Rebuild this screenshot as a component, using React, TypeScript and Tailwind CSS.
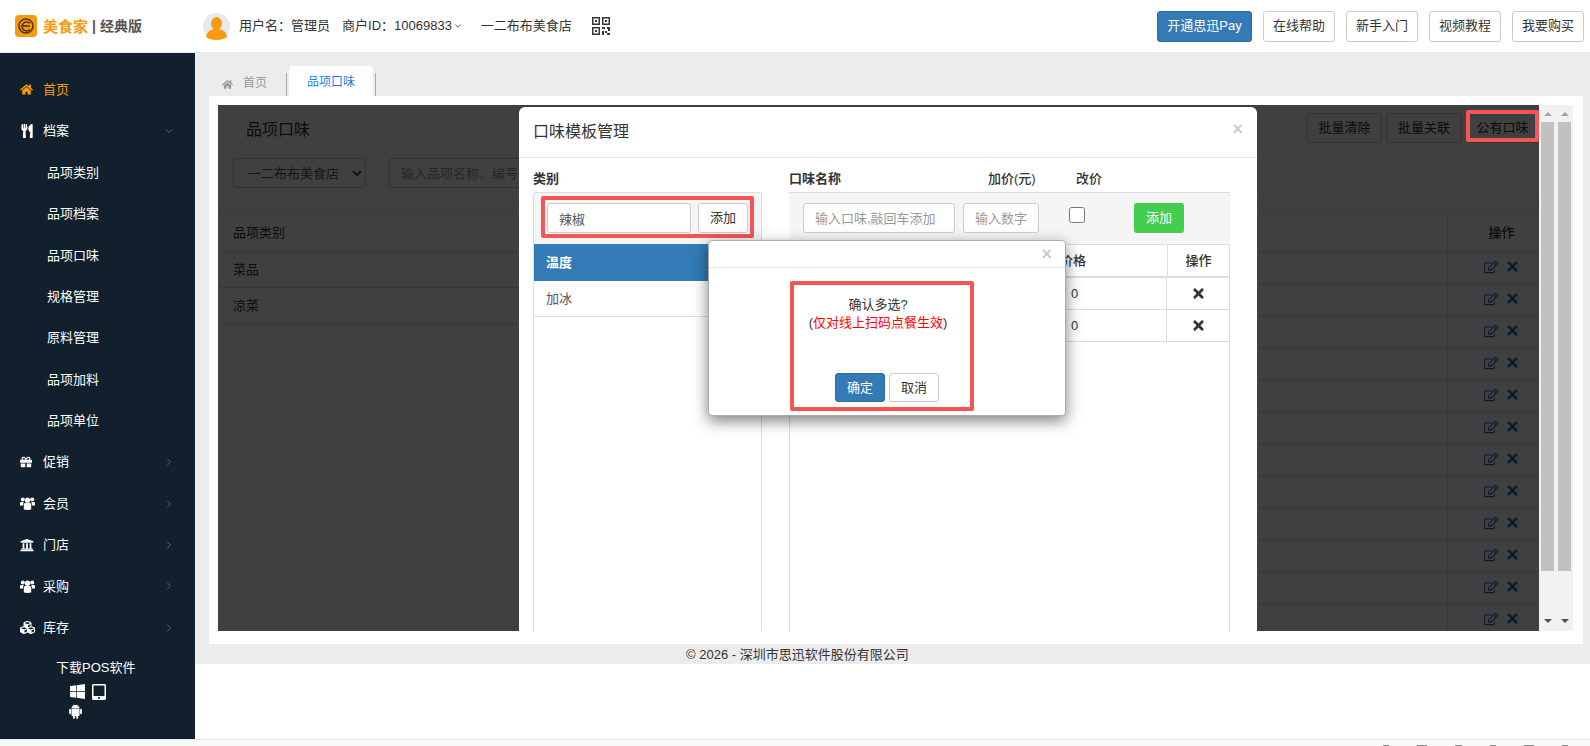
import React from "react";
import { AiFillAndroid } from "react-icons/ai";
import { FaCubes, FaGift, FaHome, FaRegEdit, FaTabletAlt, FaTimes, FaUniversity, FaUtensils, FaWindows } from "react-icons/fa";
import { LuChevronDown, LuChevronRight } from "react-icons/lu";

function GroupIcon() {
  return (
    <svg width="15" height="13" viewBox="0 0 15 13" fill="currentColor">
      <circle cx="2.8" cy="2.4" r="2" />
      <circle cx="12.2" cy="2.4" r="2" />
      <path d="M0 9V6.2C0 5.4.6 5 1.4 5h2.2L3 8.6H0zM15 9V6.2c0-.8-.6-1.2-1.4-1.2h-2.2L12 8.6h3z" />
      <circle cx="7.5" cy="3.2" r="2.6" />
      <path d="M3.8 12.6V8c0-1.4.9-2.2 2.1-2.2h3.2c1.2 0 2.1.8 2.1 2.2v4.6c-2.4.5-5 .5-7.4 0z" />
    </svg>
  );
}

const subItems = ["品项类别", "品项档案", "品项口味", "规格管理", "原料管理", "品项加料", "品项单位"];
const mainItems = [
  { label: "促销", icon: <FaGift size={12} /> },
  { label: "会员", icon: <GroupIcon /> },
  { label: "门店", icon: <FaUniversity size={14} /> },
  { label: "采购", icon: <GroupIcon /> },
  { label: "库存", icon: <FaCubes size={15} /> },
];
const headerButtons = ["在线帮助", "新手入门", "视频教程", "我要购买"];
const rowIndexes = [1, 2, 3, 4, 5, 6, 7, 8, 9, 10, 11, 12];

function Logo() {
  return (
    <div className="flex items-center w-[188px] pl-[15px] shrink-0">
      <svg width="22" height="22" viewBox="0 0 22 22" className="shrink-0">
        <rect width="22" height="22" rx="4" fill="#f79a0e" />
        <circle cx="11" cy="11" r="7" fill="none" stroke="#4a3418" strokeWidth="1.6" />
        <path d="M6 11h9M15 8.5a4.5 4.5 0 1 0 0 6" fill="none" stroke="#4a3418" strokeWidth="1.5" />
      </svg>
      <span className="ml-[6px] text-[15px] leading-none font-bold text-[#f79a0e]">美食家</span>
      <span className="mx-[4px] text-[14px] leading-none font-bold text-[#555]">|</span>
      <span className="text-[14px] leading-none font-bold text-[#555]">经典版</span>
    </div>
  );
}

function Avatar() {
  return (
    <svg width="27" height="27" viewBox="0 0 27 27" className="shrink-0">
      <ellipse cx="13.5" cy="13.5" rx="13.5" ry="13.5" fill="#e8e9ee" />
      <ellipse cx="13.5" cy="10.5" rx="5.5" ry="6.5" fill="#f79a0e" />
      <path d="M3 24c1-6 5-8 10.5-8S23 18 24 24c-3 2-6 3-10.5 3S6 26 3 24z" fill="#f79a0e" />
    </svg>
  );
}

function QrIcon() {
  return (
    <svg width="18" height="18" viewBox="0 0 18 18" fill="#33363c" className="shrink-0">
      <path d="M0 0h8v8H0zM1.5 1.5v5h5v-5zM10 0h8v8h-8zM11.5 1.5v5h5v-5zM0 10h8v8H0zM1.5 11.500v5h5v-5z" fillRule="evenodd" />
      <rect x="3" y="3" width="2" height="2" />
      <rect x="13" y="3" width="2" height="2" />
      <rect x="3" y="13" width="2" height="2" />
      <path d="M10 10h3v2h-3zM15 10h3v4h-2v-2h-1zM10 14h2v4h-2zM13 14h2v2h-2zM15 16h3v2h-3z" />
    </svg>
  );
}

function Header() {
  return (
    <header className="flex items-center h-[53px] shrink-0 bg-white border-b border-[#e8e8e8] text-[13px] text-[#333]">
      <Logo />
      <div className="ml-[15px]">
        <Avatar />
      </div>
      <span className="ml-[9px]">用户名：管理员</span>
      <span className="ml-[12px]">商户ID：10069833</span>
      <LuChevronDown size={10} className="ml-[1px]" />
      <span className="ml-[18px]">一二布布美食店</span>
      <div className="ml-[20px]">
        <QrIcon />
      </div>
      <div className="ml-auto flex gap-[11px] pr-[6px]">
        <button className="h-[31px] w-[95px] rounded-[3px] bg-[#337ab7] border border-[#2e6da4] text-white">开通思迅Pay</button>
        {headerButtons.map((label) => (
          <button key={label} className="h-[31px] w-[72px] rounded-[3px] bg-white border border-[#ccc] text-[#333]">
            {label}
          </button>
        ))}
      </div>
    </header>
  );
}

function Sidebar() {
  return (
    <aside className="w-[195px] shrink-0 h-[686px] bg-[#12202d] text-white text-[13px] pt-[16px]">
      <div className="flex items-center h-[41.4px] pl-[20px] text-[#f79a0e]">
        <span className="w-[23px]">
          <FaHome size={13} />
        </span>
        首页
      </div>
      <div className="flex items-center h-[41.4px] pl-[20px]">
        <span className="w-[23px]">
          <FaUtensils size={14} />
        </span>
        档案
        <LuChevronDown size={12} className="ml-auto mr-[20px] text-[#5a6570]" />
      </div>
      {subItems.map((label) => (
        <div key={label} className="flex items-center h-[41.4px] pl-[47px]">
          {label}
        </div>
      ))}
      {mainItems.map((item) => (
        <div key={item.label} className="flex items-center h-[41.4px] pl-[20px]">
          <span className="w-[23px]">{item.icon}</span>
          {item.label}
          <LuChevronRight size={12} className="ml-auto mr-[20px] text-[#5a6570]" />
        </div>
      ))}
      <div className="pl-[56px] pt-[11px] leading-[18px]">下载POS软件</div>
      <div className="flex flex-wrap items-center w-[40px] ml-[69px] mt-[6px] gap-x-[5px] gap-y-[3px]">
        <FaWindows size={17} />
        <FaTabletAlt size={16} />
        <AiFillAndroid size={17} className="-ml-[2px]" />
      </div>
    </aside>
  );
}

function Tabs() {
  return (
    <div className="flex h-[30px] pl-[28px] text-[12px]">
      <div className="flex items-center w-[64px] h-[23px] mt-[7px] text-[#999] border-r border-[#aaa]">
        <FaHome size={11} className="mr-[10px] -ml-[1px]" />
        <span className="-translate-y-[2px]">首页</span>
      </div>
      <div className="flex items-center justify-center w-[84px] ml-[2px] pt-[2px] bg-white rounded-t-[4px] text-[#1a7fe8]">品项口味</div>
      <div className="w-px h-[23px] mt-[7px] ml-[2px] bg-[#aaa]" />
    </div>
  );
}

function GhostButton({ label, width }: { label: string; width: string }) {
  return <button className={`h-[30px] ${width} rounded-[3px] bg-white border border-[#ccc] text-[13px] text-[#333]`}>{label}</button>;
}

function PageBehind() {
  return (
    <div className="h-full bg-white text-[13px] text-[#333]">
      <div className="flex items-start h-[53px] pl-[28px] pt-[8px]">
        <span className="text-[16px] leading-[34px]">品项口味</span>
        <div className="ml-auto flex gap-[4px]">
          <GhostButton label="批量清除" width="w-[75px]" />
          <GhostButton label="批量关联" width="w-[76px]" />
          <GhostButton label="公有口味" width="w-[73px]" />
        </div>
      </div>
      <div className="flex gap-[23px] pl-[15px] h-[38px]">
        <select className="h-[30px] w-[133px] pl-[10px] rounded-[3px] border border-[#ccc] bg-white text-[13px] text-[#555]">
          <option>一二布布美食店</option>
        </select>
        <input
          readOnly
          placeholder="输入品项名称、编号"
          className="h-[30px] w-[200px] px-[11px] rounded-[3px] border border-[#ccc] text-[13px] placeholder:text-[#999]"
        />
      </div>
      <div className="h-[19px] border-y border-[#e8e8e8] bg-[#f9f9f9]" />
      <div className="flex">
        <div className="w-[301px] pl-[1px]">
          <div className="flex items-center h-[37px] pl-[14px] border-b border-[#ddd]">品项类别</div>
          <div className="flex items-center h-[36px] pl-[14px] border-b border-[#ddd]">菜品</div>
          <div className="flex items-center h-[36px] pl-[14px] border-b border-[#ddd]">凉菜</div>
        </div>
        <div className="flex-1">
          <div className="flex justify-end h-[37px] border-b border-[#ddd]">
            <div className="flex items-center justify-center w-[92px] pl-[16px] border-l border-[#ddd] font-medium">操作</div>
          </div>
          {rowIndexes.map((row) => (
            <div key={row} className="flex justify-end h-[32px] border-b border-[#ddd]">
              <div className="flex items-center justify-center gap-[7px] w-[92px] pl-[16px] pb-[2px] border-l border-[#ddd] text-[#337ab7]">
                <FaRegEdit size={14} />
                <FaTimes size={15} />
              </div>
            </div>
          ))}
        </div>
      </div>
    </div>
  );
}

function TemplateModal() {
  return (
    <div className="absolute left-[301px] top-[2px] w-[738px] h-[700px] bg-white rounded-[6px] text-[13px] text-[#333]">
      <div className="flex items-center justify-between h-[51px] pl-[14px] pr-[14px] border-b border-[#e5e5e5]">
        <span className="text-[16px]">口味模板管理</span>
        <span className="text-[18px] font-bold leading-none text-[#ccc] -translate-y-[3px]">×</span>
      </div>
      <div className="flex pl-[14px] pt-[11px]">
        <div className="w-[229px]">
          <div className="h-[23px] leading-[20px] font-bold">类别</div>
          <div className="h-[52px] px-[7px] py-[3px] bg-[#f5f5f5] border-x border-t border-[#ddd] rounded-t-[3px]">
            <div className="flex items-end gap-[7px] w-[213px] h-[42px] px-[2px] pb-[1px] border-[4px] border-[#f55555] rounded-[2px]">
              <input
                readOnly
                defaultValue="辣椒"
                className="h-[30px] w-[144px] px-[11px] bg-white rounded-[3px] border border-[#ccc] text-[13px] text-[#555]"
              />
              <button className="h-[30px] w-[50px] bg-white rounded-[3px] border border-[#ccc]">添加</button>
            </div>
          </div>
          <div className="h-[400px] border border-t-0 border-[#ddd]">
            <div className="flex items-center h-[37px] pl-[12px] bg-[#337ab7] text-white font-bold">温度</div>
            <div className="flex items-center h-[36px] pl-[12px] border-b border-[#ddd] text-[#555]">加冰</div>
          </div>
        </div>
        <div className="w-[441px] ml-[27px]">
          <div className="flex h-[23px] leading-[20px] font-bold">
            <span className="w-[199px]">口味名称</span>
            <span className="w-[88px] font-medium">加价(元)</span>
            <span className="font-medium">改价</span>
          </div>
          <div className="flex h-[52px] pl-[14px] pt-[10px] bg-[#f5f5f5] border-t border-[#ddd]">
            <input
              readOnly
              placeholder="输入口味,敲回车添加"
              className="h-[30px] w-[152px] px-[11px] bg-white rounded-[3px] border border-[#ccc] text-[13px] placeholder:text-[#999]"
            />
            <input
              readOnly
              placeholder="输入数字"
              className="h-[30px] w-[76px] ml-[8px] px-[11px] bg-white rounded-[3px] border border-[#ccc] text-[13px] placeholder:text-[#999]"
            />
            <input type="checkbox" readOnly className="w-[16px] h-[16px] ml-[30px] mt-[4px]" />
            <button className="h-[30px] w-[50px] ml-[49px] bg-[#44ce50] rounded-[3px] text-white">添加</button>
          </div>
          <div className="h-[400px] border border-[#ddd] rounded-t-[3px]">
            <div className="flex h-[33px] border-b-2 border-[#ddd] font-medium">
              <span className="flex items-center pl-[270px] w-[378px] border-r border-[#ddd]">价格</span>
              <span className="flex items-center justify-center flex-1">操作</span>
            </div>
            {[0, 1].map((row) => (
              <div key={row} className="flex h-[32px] border-b border-[#ddd]">
                <span className="flex items-center pl-[281px] w-[377px] border-r border-[#ddd]">0</span>
                <span className="flex items-center justify-center flex-1">
                  <FaTimes size={15} />
                </span>
              </div>
            ))}
          </div>
        </div>
      </div>
    </div>
  );
}

function ConfirmDialog() {
  return (
    <div className="absolute left-[490px] top-[135px] w-[358px] h-[176px] bg-white rounded-[4px] border border-[#aaa] shadow-[0_5px_15px_rgba(0,0,0,0.5)] text-[13px] text-[#333]">
      <div className="flex items-center justify-end h-[27px] pr-[13px] border-b border-[#e5e5e5]">
        <span className="text-[18px] font-bold leading-none text-[#ccc]">×</span>
      </div>
      <div className="flex flex-col items-center w-[184px] h-[130px] ml-[81px] mt-[13px] border-[4px] border-[#f55555] rounded-[2px] pt-[11px]">
        <p className="leading-[18px] mr-[8px]">确认多选?</p>
        <p className="leading-[18px] mr-[8px]">
          (<span className="text-[#f00]">仅对线上扫码点餐生效</span>)
        </p>
        <div className="flex gap-[4px] mt-auto mb-[5px] ml-[10px]">
          <button className="h-[29px] w-[50px] rounded-[3px] bg-[#337ab7] border border-[#2e6da4] text-white">确定</button>
          <button className="h-[29px] w-[50px] rounded-[3px] bg-white border border-[#ccc]">取消</button>
        </div>
      </div>
    </div>
  );
}

function ScrollTrack() {
  return (
    <div className="flex flex-col items-center w-[17px] h-[526px] bg-[#f1f1f1]">
      <div className="mt-[7px] w-0 h-0 border-x-[4px] border-x-transparent border-b-[4px] border-b-[#a3a3a3]" />
      <div className="mt-[6px] w-[13px] h-[449px] bg-[#c1c1c1]" />
      <div className="mt-[48px] w-0 h-0 border-x-[4px] border-x-transparent border-t-[4px] border-t-[#505050]" />
    </div>
  );
}

function Workspace() {
  return (
    <div className="flex w-[1374px] h-[548px] ml-[14px] pl-[9px] pt-[9px] bg-white">
      <div className="relative w-[1321px] h-[526px] overflow-hidden">
        <PageBehind />
        <div className="absolute inset-0 bg-black/75" />
        <TemplateModal />
        <ConfirmDialog />
        <div className="absolute left-[1248px] top-[5px] w-[73px] h-[32px] border-[4px] border-[#f55555] rounded-[2px]" />
      </div>
      <ScrollTrack />
      <ScrollTrack />
    </div>
  );
}

export default function App() {
  return (
    <div className="flex flex-col w-[1590px] h-[746px] overflow-hidden bg-white font-['Liberation_Sans','Noto_Sans_CJK_SC',sans-serif]">
      <Header />
      <div className="flex flex-1 min-h-0">
        <Sidebar />
        <main className="flex-1">
          <div className="bg-[#ececec] pt-[13px]">
            <Tabs />
            <Workspace />
            <div className="h-[20px] pl-[491px] text-[13px] leading-[21px] text-[#333]">© 2026 - 深圳市思迅软件股份有限公司</div>
          </div>
        </main>
      </div>
      <div className="flex justify-end gap-[28px] h-[7px] shrink-0 pr-[22px] pt-[5px] bg-[#f9f9f9] border-t border-[#e7e7e7]">
        <span className="w-[6px] h-[2px] bg-[#888]" />
        <span className="w-[10px] h-[2px] bg-[#888]" />
        <span className="w-[7px] h-[2px] bg-[#888]" />
        <span className="w-[6px] h-[2px] bg-[#888]" />
        <span className="w-[10px] h-[2px] bg-[#888]" />
        <span className="w-[6px] h-[2px] bg-[#888]" />
      </div>
    </div>
  );
}
